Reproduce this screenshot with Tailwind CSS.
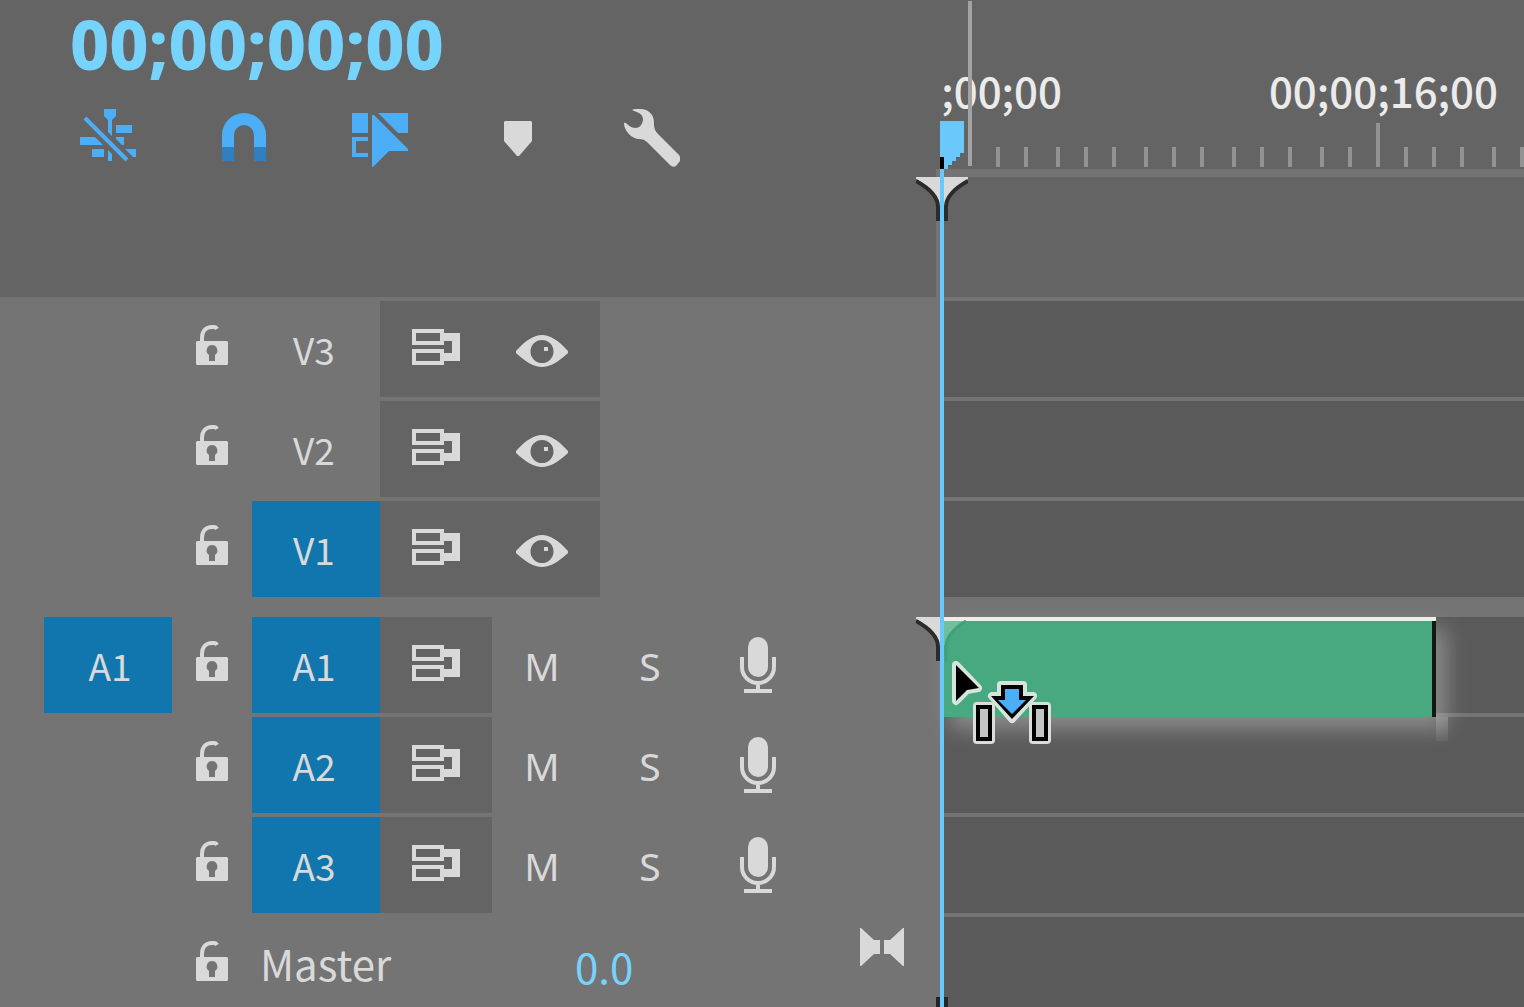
<!doctype html>
<html lang="en">
<head>
    <meta charset="UTF-8">
    <meta name="viewport" content="width=device-width, initial-scale=1">
    <title>Timeline</title>
    <script src="https://cdn.jsdelivr.net/npm/@tailwindcss/browser@4"></script>
</head>
<body class="bg-[#747474]">

<!-- shared icons -->
<svg class="hidden">
    <symbol id="lock" viewBox="0 0 32 48">
        <path fill="none" stroke="currentColor" stroke-width="4" d="M6 17V13C6 6 10 2 16 2H18Q20 2 21 4"/>
        <path fill="currentColor" fill-rule="evenodd" d="M1 16H31L32 17V39L31 40H1L0 39V17ZM16 20A5.500 5.500 0 0 0 13 30V36H19V30A5.500 5.500 0 0 0 16 20Z"/>
    </symbol>
    <symbol id="sync" viewBox="0 0 48 40">
        <path fill="currentColor" fill-rule="evenodd" d="M0 0H32V4H48V32H32V36H0V20H32V24H40V12H32V16H0ZM4 4V12H28V4ZM4 24V32H28V24Z"/>
    </symbol>
    <symbol id="eye" viewBox="0 0 52 36">
        <path fill="currentColor" fill-rule="evenodd" d="M0 20C10 9 18 4 26 4S42 9 52 20V22C42 31 34 36 26 36S10 31 0 22ZM26 9A11.500 11.500 0 1 0 26 32A11.500 11.500 0 1 0 26 9Z"/>
        <path fill="currentColor" d="M28 16H32V20H28Z"/>
    </symbol>
    <symbol id="mic" viewBox="0 0 36 56">
        <rect fill="currentColor" x="8" y="0" width="20" height="40" rx="10"/>
        <path fill="none" stroke="currentColor" stroke-width="4" d="M2 20V30A16 16 0 0 0 34 30V20M18 46V54M4 54H32"/>
    </symbol>
</svg>

<main class="relative flex h-screen flex-col overflow-hidden text-[#d9d9d9] font-['Noto_Sans_CJK_SC','Noto_Sans',sans-serif]">

    <header class="flex h-[297px] shrink-0 bg-[#646464]">
        <div class="w-[936px] shrink-0 pl-10 pt-3">
            <button class="block pl-[30px] font-['Noto_Sans',sans-serif] text-[68px] leading-[64px] font-extrabold text-[#76d3fc]">00;00;00;00</button>
            <div class="mt-8 flex text-[#4baef6]">
                <button aria-label="Insert as nests" class="flex w-[136px] justify-center">
                    <svg class="h-15 w-14" viewBox="0 0 56 60" fill="currentColor">
                        <path d="M24 1H36V8L32 12V28L28 24V12L24 8ZM28 42L32 46V53H28ZM36 17H52V25H36ZM0 29H15L23 37H0ZM12 41H24V49H12ZM36 29H44V37H42L36 31ZM45 41H56V49H53Z"/>
                        <path d="M5 10L47 52" fill="none" stroke="currentColor" stroke-width="4"/>
                    </svg>
                </button>
                <button aria-label="Snap" class="flex w-[136px] justify-center">
                    <svg class="h-15 w-11" viewBox="0 0 44 60" fill="currentColor">
                        <path d="M0 39V27A22 22 0 0 1 44 27V39H32V27A10 10 0 0 0 12 27V39Z"/>
                        <path fill="#3080c1" d="M0 39H12V53H0ZM32 39H44V53H32Z"/>
                    </svg>
                </button>
                <button aria-label="Linked selection" class="flex w-[136px] justify-center">
                    <svg class="h-15 w-14" viewBox="0 0 56 60" fill="currentColor">
                        <path d="M0 5H16V25H0ZM0 29H16V33H4V45H16V49H0ZM26 5H56V25H46ZM20 7H22L56 41V43H37L21 59H20Z"/>
                    </svg>
                </button>
                <button aria-label="Add marker" class="flex w-[136px] justify-center text-[#d9d9d9]">
                    <svg class="h-15 w-8" viewBox="0 0 32 60" fill="currentColor">
                        <path d="M5 13H31L32 14V33L19 48H17L4 33V14Z"/>
                    </svg>
                </button>
                <button aria-label="Timeline settings" class="flex w-[136px] justify-center text-[#d9d9d9]">
                    <svg class="h-15 w-14" viewBox="0 0 56 60" fill="currentColor">
                        <path d="M8 2Q9 1 12 1H17Q24 1 28 7Q30 10 30 17Q30 22 34 26L55 47Q57 50 56 53L52 58Q48 60 45 56L23 34Q20 31 16 31Q9 31 4 25Q0 20 0 15Q1 14 3 16Q7 20 12 20Q18 19 19 12Q19 7 15 5Z"/>
                    </svg>
                </button>
            </div>
        </div>
        <div class="flex min-w-0 flex-1 flex-col">
            <!-- time ruler -->
            <div class="relative ml-1 h-[169px] overflow-hidden">
                <div class="flex pt-[62px] text-[42px] leading-[56px] font-medium text-[#ebebeb]">
                    <div class="flex w-[122px] shrink-0 justify-end overflow-hidden"><span>00;00;00;00</span></div>
                    <div class="flex w-[436px] shrink-0 justify-end"><span>00;00;16;00</span></div>
                </div>
                <svg class="absolute inset-0 h-full w-full">
                    <defs>
                        <pattern id="ticks" x="28" y="147" width="88" height="40" patternUnits="userSpaceOnUse">
                            <path fill="#939393" d="M0 0H4V20H0ZM28 0H32V20H28ZM56 0H60V20H56Z"/>
                        </pattern>
                        <pattern id="ticks-next" x="464" y="147" width="88" height="40" patternUnits="userSpaceOnUse">
                            <path fill="#939393" d="M0 0H4V20H0ZM28 0H32V20H28ZM56 0H60V20H56Z"/>
                        </pattern>
                    </defs>
                    <rect x="54" y="147" width="386" height="20" fill="url(#ticks)"/>
                    <rect x="464" y="147" width="100%" height="20" fill="url(#ticks-next)"/>
                    <rect x="436" y="123" width="4" height="44" fill="#939393"/>
                    <rect x="28" y="1" width="4" height="165" fill="#a3a3a3"/>
                </svg>
            </div>
            <div class="flex-1 border-t-8 border-l-4 border-[#747474]"></div>
        </div>
    </header>

    <!-- video tracks -->
    <section class="mt-1 flex shrink-0 flex-col gap-1">
        <div class="flex h-24">
            <div class="flex w-[940px] shrink-0 items-stretch pl-[172px]">
                <button aria-label="Lock V3" class="flex w-20 items-center justify-center"><svg class="h-12 w-8"><use href="#lock"/></svg></button>
                <button class="w-32 pr-1 text-[37px] leading-10">V3</button>
                <button aria-label="Sync lock V3" class="flex w-28 items-center justify-center bg-[#646464]"><svg class="h-10 w-12"><use href="#sync"/></svg></button>
                <button aria-label="Show V3" class="flex w-[108px] items-center justify-center bg-[#646464] pr-2"><svg class="h-9 w-13"><use href="#eye"/></svg></button>
            </div>
            <div class="flex-1 bg-[#5a5a5a]"></div>
        </div>
        <div class="flex h-24">
            <div class="flex w-[940px] shrink-0 items-stretch pl-[172px]">
                <button aria-label="Lock V2" class="flex w-20 items-center justify-center"><svg class="h-12 w-8"><use href="#lock"/></svg></button>
                <button class="w-32 pr-1 text-[37px] leading-10">V2</button>
                <button aria-label="Sync lock V2" class="flex w-28 items-center justify-center bg-[#646464]"><svg class="h-10 w-12"><use href="#sync"/></svg></button>
                <button aria-label="Show V2" class="flex w-[108px] items-center justify-center bg-[#646464] pr-2"><svg class="h-9 w-13"><use href="#eye"/></svg></button>
            </div>
            <div class="flex-1 bg-[#5a5a5a]"></div>
        </div>
        <div class="flex h-24">
            <div class="flex w-[940px] shrink-0 items-stretch pl-[172px]">
                <button aria-label="Lock V1" class="flex w-20 items-center justify-center"><svg class="h-12 w-8"><use href="#lock"/></svg></button>
                <button class="w-32 bg-[#1176ad] pr-1 text-[37px] leading-10">V1</button>
                <button aria-label="Sync lock V1" class="flex w-28 items-center justify-center bg-[#646464]"><svg class="h-10 w-12"><use href="#sync"/></svg></button>
                <button aria-label="Show V1" class="flex w-[108px] items-center justify-center bg-[#646464] pr-2"><svg class="h-9 w-13"><use href="#eye"/></svg></button>
            </div>
            <div class="flex-1 bg-[#5a5a5a]"></div>
        </div>
    </section>

    <!-- audio tracks -->
    <section class="mt-5 flex shrink-0 flex-col gap-1">
        <div class="flex h-24">
            <div class="flex w-[940px] shrink-0 items-stretch pl-11">
                <button class="w-32 bg-[#1176ad] pl-1 text-[37px] leading-10">A1</button>
                <button aria-label="Lock A1" class="flex w-20 items-center justify-center"><svg class="h-12 w-8"><use href="#lock"/></svg></button>
                <button class="w-32 bg-[#1176ad] pr-1 text-[37px] leading-10">A1</button>
                <button aria-label="Sync lock A1" class="flex w-28 items-center justify-center bg-[#646464]"><svg class="h-10 w-12"><use href="#sync"/></svg></button>
                <button aria-label="Mute A1" class="w-[108px] pt-0.5 pr-2 font-['Noto_Sans',sans-serif] text-[39px] leading-10">M</button>
                <button aria-label="Solo A1" class="w-[108px] pt-0.5 pr-2 font-['Noto_Sans',sans-serif] text-[39px] leading-10">S</button>
                <button aria-label="Record A1" class="flex w-[108px] items-center justify-center pr-2"><svg class="h-14 w-9"><use href="#mic"/></svg></button>
            </div>
            <div class="relative flex-1 bg-[#5a5a5a]">
                <!-- dragged clip and its glow -->
                <div class="absolute top-0 left-0 h-25 w-[496px] border-t-4 border-[#e9f0ea] bg-[#48a981] shadow-[10px_12px_20px_rgba(255,255,255,0.3)]">
                    <div class="absolute top-0 right-0 h-24 w-1 bg-[#161616]"></div>
                    <div class="absolute top-24 left-full h-6 w-3 bg-linear-to-b from-white/20 to-white/5"></div>
                </div>
            </div>
        </div>
        <div class="flex h-24">
            <div class="flex w-[940px] shrink-0 items-stretch pl-[172px]">
                <button aria-label="Lock A2" class="flex w-20 items-center justify-center"><svg class="h-12 w-8"><use href="#lock"/></svg></button>
                <button class="w-32 bg-[#1176ad] pr-1 text-[37px] leading-10">A2</button>
                <button aria-label="Sync lock A2" class="flex w-28 items-center justify-center bg-[#646464]"><svg class="h-10 w-12"><use href="#sync"/></svg></button>
                <button aria-label="Mute A2" class="w-[108px] pt-0.5 pr-2 font-['Noto_Sans',sans-serif] text-[39px] leading-10">M</button>
                <button aria-label="Solo A2" class="w-[108px] pt-0.5 pr-2 font-['Noto_Sans',sans-serif] text-[39px] leading-10">S</button>
                <button aria-label="Record A2" class="flex w-[108px] items-center justify-center pr-2"><svg class="h-14 w-9"><use href="#mic"/></svg></button>
            </div>
            <div class="flex-1 bg-[#5a5a5a]"></div>
        </div>
        <div class="flex h-24">
            <div class="flex w-[940px] shrink-0 items-stretch pl-[172px]">
                <button aria-label="Lock A3" class="flex w-20 items-center justify-center"><svg class="h-12 w-8"><use href="#lock"/></svg></button>
                <button class="w-32 bg-[#1176ad] pr-1 text-[37px] leading-10">A3</button>
                <button aria-label="Sync lock A3" class="flex w-28 items-center justify-center bg-[#646464]"><svg class="h-10 w-12"><use href="#sync"/></svg></button>
                <button aria-label="Mute A3" class="w-[108px] pt-0.5 pr-2 font-['Noto_Sans',sans-serif] text-[39px] leading-10">M</button>
                <button aria-label="Solo A3" class="w-[108px] pt-0.5 pr-2 font-['Noto_Sans',sans-serif] text-[39px] leading-10">S</button>
                <button aria-label="Record A3" class="flex w-[108px] items-center justify-center pr-2"><svg class="h-14 w-9"><use href="#mic"/></svg></button>
            </div>
            <div class="flex-1 bg-[#5a5a5a]"></div>
        </div>
        <div class="flex h-24">
            <div class="flex w-[940px] shrink-0 items-stretch pl-[172px]">
                <button aria-label="Lock master" class="flex w-20 items-center justify-center"><svg class="h-12 w-8"><use href="#lock"/></svg></button>
                <label for="level" class="w-80 pt-[18px] pl-2 text-[42px] leading-14">Master</label>
                <input id="level" type="text" value="0.0" class="h-20 w-24 pt-4 pl-[3px] text-[42px] leading-10 text-[#76d3fc] outline-none">
                <button aria-label="Collapse" class="mr-9 ml-auto self-start pt-[11px]">
                    <svg class="h-10 w-11" viewBox="0 0 44 40" fill="currentColor"><path d="M0 0H1L14 12H20V26H14L1 38H0ZM44 0H43L30 12H24V26H30L43 38H44Z"/></svg>
                </button>
            </div>
            <div class="flex-1 bg-[#5a5a5a]"></div>
        </div>
    </section>

    <!-- edit point markers, playhead and drag cursor float over the tracks -->
    <svg class="pointer-events-none absolute top-[177px] left-[916px] h-11 w-13" viewBox="0 0 52 44">
        <path fill="#d9d9d9" d="M0 0H52V2Q32 13 30 28H22Q20 13 0 2Z"/>
        <path fill="none" stroke="#2b2b2b" stroke-width="4" d="M0 4Q22 16 22 30V44M52 4Q30 16 30 30V44"/>
    </svg>
    <svg class="pointer-events-none absolute top-[617px] left-[916px] h-11 w-13" viewBox="0 0 52 44">
        <path fill="#d9d9d9" d="M0 0H24V28H22Q20 13 0 2Z"/>
        <path fill="none" stroke="#2b2b2b" stroke-width="4" d="M0 4Q22 16 22 30V44"/>
        <path fill="#6fbf9d" d="M28 4H49Q32 13 30 28H28Z"/>
        <path fill="none" stroke="#40a079" stroke-width="3" d="M50 4Q30 16 30 30V44"/>
    </svg>
    <div class="pointer-events-none absolute bottom-0 left-[936px] h-[10px] w-3 bg-[#242424]"></div>
    <div class="pointer-events-none absolute top-[169px] bottom-0 left-[940px] w-1 bg-[#6ac8fa]"></div>
    <svg class="pointer-events-none absolute top-[121px] left-[940px] h-12 w-6" viewBox="0 0 24 48">
        <path fill="#6ac8fa" d="M0 0H24V32H20V36H16V40H12V44H8V48H0Z"/>
        <path d="M0 36H4V48H0Z"/>
    </svg>
    <svg class="pointer-events-none absolute top-[655px] left-[948px] h-24 w-28" viewBox="0 0 112 96" stroke-linejoin="round">
        <g fill="#d5e5dd" stroke="#d5e5dd" stroke-width="8">
            <path d="M8 10L30 33L19 35L8 46Z"/>
            <path d="M53 30H75V41H85L64 64L44 41H53Z"/>
            <path stroke="#dcdcdc" d="M29 51H43V85H29ZM85 51H99V85H85Z"/>
        </g>
        <path d="M8 10L31 33L19 35L8 46ZM53 30H75V41H86L64 64L43 41H53Z"/>
        <path fill="#4baef6" d="M57 34H71V45H78L64 59L50 45H57Z"/>
        <path d="M28 50H44V86H28ZM84 50H100V86H84Z"/>
        <path fill="#c4c4c4" d="M32 54H40V82H32ZM88 54H96V82H88Z"/>
    </svg>
</main>
</body>
</html>
